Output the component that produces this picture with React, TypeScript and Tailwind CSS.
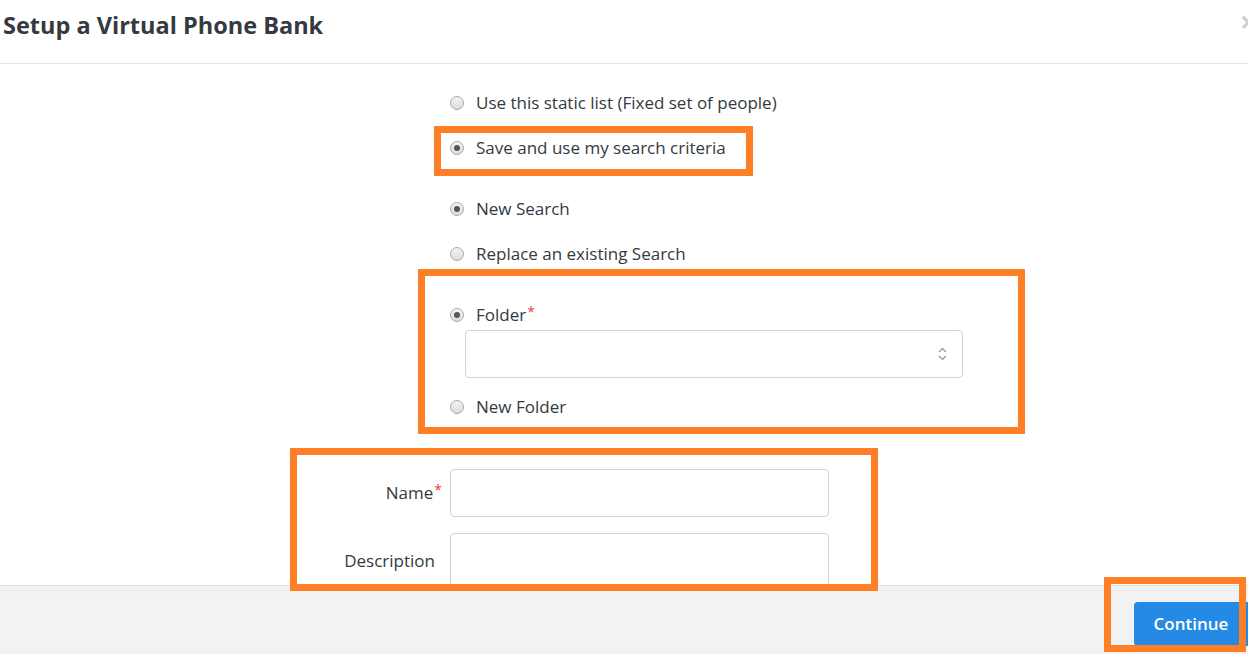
import React from 'react';

const Radio: React.FC<{ checked?: boolean }> = ({ checked }) => (
  <span className="flex h-[14px] w-[14px] shrink-0 items-center justify-center rounded-full border border-[#a9a9a9] bg-gradient-to-b from-[#f4f4f4] to-[#dcdcdc]">
    {checked && <span className="h-[6px] w-[6px] rounded-full bg-[#555]" />}
  </span>
);

const Req = () => <span className="ml-[1px] align-top text-[14px] leading-[18px] text-[#e8453c]">*</span>;

const Option: React.FC<{ label: React.ReactNode; checked?: boolean; className?: string }> = ({ label, checked, className }) => (
  <label className={`flex h-6 items-center gap-[12px] ${className ?? ''}`}>
    <Radio checked={checked} />
    <span className="leading-6">{label}</span>
  </label>
);

export default function App() {
  return (
    <div className="relative h-[654px] w-[1248px] overflow-hidden bg-white text-[#343a40]" style={{ fontFamily: '"Open Sans", "Liberation Sans", sans-serif' }}>
      {/* header */}
      <div className="flex h-[64px] items-start justify-between border-b border-[#e3e3e3] pl-[3px]">
        <h1 className="mt-[9px] text-[23.5px] font-bold leading-[32px]">Setup a Virtual Phone Bank</h1>
        <span className="-mr-[9px] mt-[6px] text-[30px] font-bold leading-[32px] text-[#d0d0d0]">×</span>
      </div>

      {/* body */}
      <div className="h-[521px] overflow-hidden text-[17px]">
        <div className="ml-[450px] pt-[27px]">
          <Option label="Use this static list (Fixed set of people)" />
          <Option label="Save and use my search criteria" checked className="mt-[21px]" />
          <Option label="New Search" checked className="mt-[37px]" />
          <Option label="Replace an existing Search" className="mt-[21px]" />
          <Option label={<>Folder<Req /></>} checked className="mt-[37px]" />
          <div className="ml-[15px] mt-[3px] flex h-[48px] w-[498px] items-center justify-end rounded-[4px] border border-[#cfd4da] pr-[15px]">
            <svg width="9" height="14" viewBox="0 0 9 14" fill="none" stroke="#8a8f96" strokeWidth="1.1">
              <path d="M1 5 L4.5 1.5 L8 5" />
              <path d="M1 9 L4.5 12.5 L8 9" />
            </svg>
          </div>
          <Option label="New Folder" className="mt-[17px]" />
        </div>

        <div className="mt-[50px] flex items-center gap-[8px]">
          <span className="w-[442px] text-right leading-6">Name<Req /></span>
          <div className="h-[48px] w-[379px] rounded-[4px] border border-[#cfd4da]" />
        </div>
        <div className="mt-[16px] flex items-start gap-[8px]">
          <span className="mt-[16px] w-[435px] text-right leading-6">Description</span>
          <div className="ml-[7px] h-[80px] w-[379px] rounded-[4px] border border-[#cfd4da]" />
        </div>
      </div>

      {/* footer */}
      <div className="flex h-[69px] justify-end border-t border-[#dcdfe3] bg-[#f1f2f4] pt-[16px]">
        <button className="h-[44px] w-[114px] rounded-l-[4px] bg-[#2589e6] text-[17px] font-semibold text-white">Continue</button>
      </div>

      {/* annotation boxes */}
      <div className="absolute left-[434px] top-[126px] h-[50px] w-[319px] border-[7px] border-[#ff7f27]" />
      <div className="absolute left-[418px] top-[269px] h-[165px] w-[607px] border-[7px] border-[#ff7f27]" />
      <div className="absolute left-[290px] top-[448px] h-[143px] w-[588px] border-[7px] border-[#ff7f27]" />
      <div className="absolute left-[1104px] top-[577px] h-[75px] w-[142px] border-[7px] border-[#ff7f27]" />
    </div>
  );
}
